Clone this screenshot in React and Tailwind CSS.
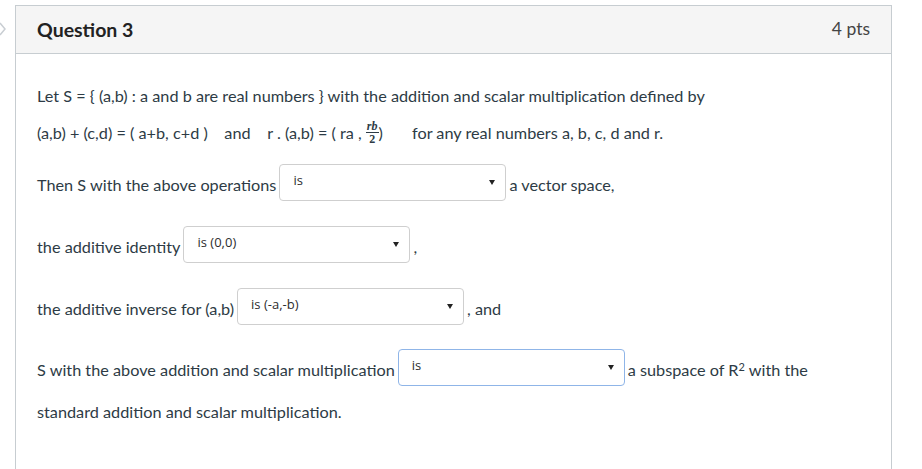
const Select = ({ value, active }) => {
  return (
    <div
      className={`relative mx-[3px] flex h-[37px] w-[227px] shrink-0 rounded-[4px] border bg-white pl-[13px] pt-[7px] ${active ? 'border-[#8fb5e8]' : 'border-[#cfcfcf]'}`}
    >
      <span className="text-[13px] leading-[16px] text-[#2d2d2d]" style={{ fontFamily: '"Open Sans", "Liberation Sans", sans-serif' }}>{value}</span>
      <svg className="absolute right-[10px] top-[15px]" width="6" height="5" viewBox="0 0 6 5">
        <path d="M0 0 L6 0 L3 5 Z" fill="#222" />
      </svg>
    </div>
  )
}

const Row = ({ children, className }) => (
  <div className={`flex items-center ${className}`}>{children}</div>
)

const Txt = ({ children }) => <span className="pt-[6px]">{children}</span>

const App = () => {
  return (
    <div className="h-[469px] w-[922px] overflow-hidden bg-white pt-[5px] text-[16.25px] text-[#2d3b45]" style={{ fontFamily: 'Lato, "Liberation Sans", sans-serif' }}>
      <svg className="absolute left-0 top-[22px]" width="6" height="14" viewBox="0 0 6 14">
        <path d="M0 1 L5 7 L0 13" fill="none" stroke="#c9ced3" strokeWidth="1.5" />
      </svg>
      <div className="ml-[15px] w-[877px] border border-b-0 border-[#c7cdd1]">
        <div className="flex h-[48px] items-center justify-between border-b border-[#c7cdd1] bg-[#f5f5f5] pl-[21px] pr-[21px]">
          <span className="text-[19.5px] font-bold text-[#222]">Question 3</span>
          <span className="text-[17.5px] text-[#444]">4 pts</span>
        </div>
        <div className="h-[420px] pl-[21px] pt-[32px]">
          <div className="h-[20px] leading-[20px]">
            Let S = {'{'} (a,b) : a and b are real numbers {'}'} with the addition and scalar multiplication defined by
          </div>
          <div className="mt-[17px] flex h-[20px] items-center whitespace-pre leading-[20px]">
            <span>(a,b) + (c,d) = ( a+b, c+d )    and    r . (a,b) = ( ra , </span>
            <span className="inline-flex flex-col items-center leading-none" style={{ fontFamily: '"Liberation Serif", serif' }}>
              <span className="border-b border-[#2d3b45] px-[1px] text-[12px] italic font-bold leading-[11px]">rb</span>
              <span className="text-[12px] font-bold leading-[12px]">2</span>
            </span>
            <span>)       for any real numbers a, b, c, d and r.</span>
          </div>
          <Row className="mt-[21px]">
            <Txt>Then S with the above operations</Txt>
            <Select value="is" />
            <Txt>a vector space,</Txt>
          </Row>
          <Row className="mt-[25px]">
            <Txt>the additive identity</Txt>
            <Select value="is (0,0)" />
            <Txt>,</Txt>
          </Row>
          <Row className="mt-[25px]">
            <Txt>the additive inverse for (a,b)</Txt>
            <Select value="is (-a,-b)" />
            <Txt>, and</Txt>
          </Row>
          <Row className="mt-[24px]">
            <Txt>S with the above addition and scalar multiplication</Txt>
            <Select value="is" active />
            <Txt>
              a subspace of R<sup className="text-[11px]">2</sup> with the
            </Txt>
          </Row>
          <div className="mt-[16px] leading-[20px]">standard addition and scalar multiplication.</div>
        </div>
      </div>
    </div>
  )
}

export default App
